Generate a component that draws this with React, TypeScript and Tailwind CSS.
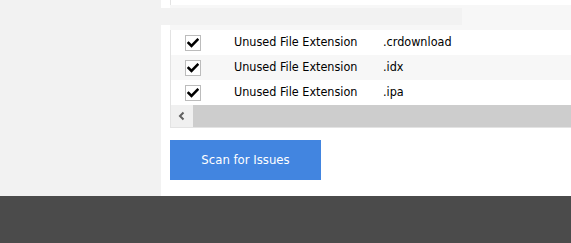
import React from "react";

const rows = [
  { label: "Unused File Extension", ext: ".crdownload", alt: false },
  { label: "Unused File Extension", ext: ".idx", alt: true },
  { label: "Unused File Extension", ext: ".ipa", alt: false },
];

const tahoma = "'DejaVu Sans Condensed', 'Liberation Sans', Arial, sans-serif";

function Check() {
  return (
    <div className="w-[16px] h-[16px] border border-[#bcbcbc] bg-white flex items-center justify-center">
      <svg width="12" height="10" viewBox="0 0 12 10">
        <path d="M1.5 5 L4.5 8 L10.5 1.8" fill="none" stroke="#000" strokeWidth="2.6" strokeLinecap="square" />
      </svg>
    </div>
  );
}

export default function App() {
  return (
    <div className="w-[571px] h-[243px] flex flex-col overflow-hidden" style={{ fontFamily: tahoma }}>
      <div className="flex h-[196px]">
        <div className="w-[161px] bg-[#f2f2f2]" />
        <div className="flex-1 bg-white flex flex-col">
          <div className="ml-[9px] h-[5px] border-l border-[#e3e3e3]" />
          <div className="ml-[9px] h-[25px] bg-[#f7f7f7] pt-[3px]">
            <div className="-ml-[9px] w-[301px] h-[17px] bg-[#f2f2f2]" />
          </div>
          <div className="ml-[9px] border-l border-b border-[#e3e3e3]">
            {rows.map((r, i) => (
              <div key={i} className={`h-[25px] flex items-center ${r.alt ? "bg-[#f7f7f7]" : "bg-white"}`}>
                <div className="ml-[14px] w-[16px]">
                  <Check />
                </div>
                <div className="ml-[33px] w-[149px] text-[12.5px] text-black" style={{ fontFamily: tahoma }}>
                  {r.label}
                </div>
                <div className="text-[12.5px] text-black" style={{ fontFamily: tahoma }}>
                  {r.ext}
                </div>
              </div>
            ))}
            <div className="h-[22px] flex bg-[#cdcdcd]">
              <div className="w-[22px] bg-[#f0f0f0] flex items-center justify-center">
                <svg width="8" height="10" viewBox="0 0 8 10">
                  <path d="M5.5 1.5 L2 5 L5.5 8.5" fill="none" stroke="#606060" strokeWidth="2" />
                </svg>
              </div>
            </div>
          </div>
          <button className="mt-[12px] ml-[9px] w-[151px] h-[40px] bg-[#4285e0] text-white text-[13px] flex items-center justify-center" style={{ fontFamily: tahoma }}>
            Scan for Issues
          </button>
        </div>
      </div>
      <div className="flex-1 bg-[#4b4b4b]" />
    </div>
  );
}
